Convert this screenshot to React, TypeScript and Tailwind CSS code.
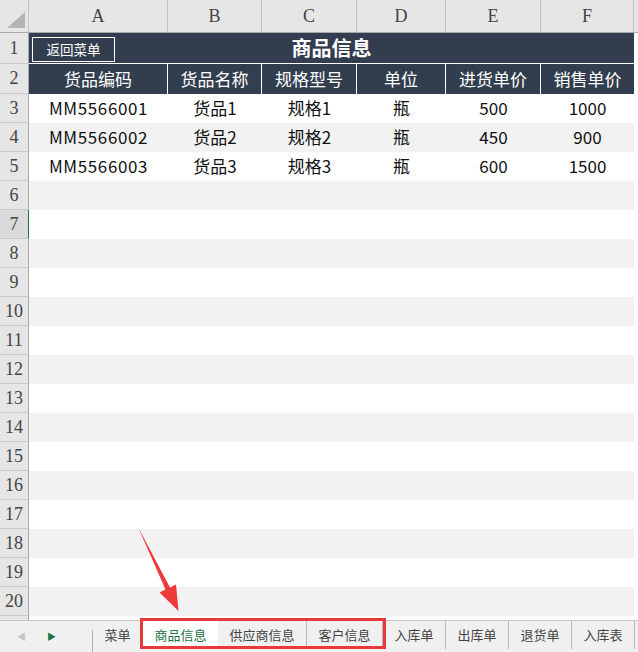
import React from "react"

const cols = [
  { key: "A", w: "w-[139px]" },
  { key: "B", w: "w-[94px]" },
  { key: "C", w: "w-[95px]" },
  { key: "D", w: "w-[89px]" },
  { key: "E", w: "w-[95px]" },
  { key: "F", w: "w-[93px]" },
]

const headers = ["货品编码", "货品名称", "规格型号", "单位", "进货单价", "销售单价"]

const data = [
  ["MM5566001", "货品1", "规格1", "瓶", "500", "1000"],
  ["MM5566002", "货品2", "规格2", "瓶", "450", "900"],
  ["MM5566003", "货品3", "规格3", "瓶", "600", "1500"],
]

const tabs = ["菜单", "商品信息", "供应商信息", "客户信息", "入库单", "出库单", "退货单", "入库表"]

const serif = "font-['Liberation_Serif','DejaVu_Serif',serif]"
const sans = "font-['Noto_Sans_CJK_SC','Noto_Sans',sans-serif]"

function RowHead({ n, active }: { n: number; active?: boolean }) {
  return (
    <div
      className={`flex w-[29px] shrink-0 items-center justify-center border-b border-r border-b-[#c9c9c9] text-[18px] text-[#444] ${serif} ${
        active ? "border-r-[#217346] bg-[#dadada]" : "border-r-[#a9a9a9] bg-[#e6e6e6]"
      }`}
    >
      {n}
    </div>
  )
}

export default function App() {
  const rows = Array.from({ length: 18 }, (_, i) => i + 3)

  return (
    <div className={`relative flex h-[652px] w-[638px] flex-col overflow-hidden bg-white ${sans}`}>
      {/* column letters */}
      <div className="flex h-[33px] shrink-0 border-b border-[#a9a9a9] bg-[#e6e6e6]">
        <div className="relative w-[29px] shrink-0 border-r border-[#c3c3c3]">
          <svg className="absolute left-[7px] top-[12px]" width="18" height="16" viewBox="0 0 18 16">
            <polygon points="0,16 18,16 18,0" fill="#b5b5b5" />
          </svg>
        </div>
        {cols.map((c) => (
          <div
            key={c.key}
            className={`${c.w} flex shrink-0 items-end justify-center border-r border-[#c3c3c3] pb-[2px] text-[18px] text-[#444] ${serif}`}
          >
            {c.key}
          </div>
        ))}
        <div className="flex-1" />
      </div>

      {/* row 1 title */}
      <div className="flex h-[31px] shrink-0">
        <RowHead n={1} />
        <div className="relative flex w-[605px] shrink-0 items-center justify-center border-b border-white bg-[#323e4f]">
          <span className="text-[20px] font-bold leading-none text-white">商品信息</span>
          <div className="absolute left-[3px] top-[4px] flex h-[25px] w-[83px] items-center justify-center border border-white text-[13.5px] text-white">
            返回菜单
          </div>
        </div>
      </div>

      {/* row 2 headers */}
      <div className="flex h-[30px] shrink-0">
        <RowHead n={2} />
        {headers.map((h, i) => (
          <div
            key={h}
            className={`${cols[i].w} flex shrink-0 items-center justify-center bg-[#323e4f] text-[17px] text-white ${
              i < 5 ? "border-r border-white" : ""
            }`}
          >
            {h}
          </div>
        ))}
      </div>

      {rows.map((n) => {
        const rec = data[n - 3]
        const band = n % 2 === 0 ? "bg-[#f2f2f2]" : "bg-white"
        return (
          <div key={n} className="flex h-[29px] shrink-0">
            <RowHead n={n} active={n === 7} />
            {cols.map((c, i) => (
              <div
                key={c.key}
                className={`${c.w} ${band} flex shrink-0 items-center justify-center pb-[1px] text-[17px] text-[#111] ${
                  i === 0 ? "tracking-[0.6px]" : ""
                }`}
              >
                {rec ? rec[i] : ""}
              </div>
            ))}
          </div>
        )
      })}

      <div className="flex flex-1">
        <div className="w-[29px] shrink-0 border-r border-[#a9a9a9] bg-[#e6e6e6]" />
      </div>

      {/* sheet tabs */}
      <div className="flex h-[32px] shrink-0 border-t border-[#c6c6c6] bg-[#f0f0f0] text-[13px] text-[#444]">
        <div className="flex w-[93px] shrink-0 items-center">
          <span className="ml-[17px] text-[9px] text-[#c4c4c4]">◀</span>
          <span className="ml-[21px] text-[9px] text-[#217346]">▶</span>
          <div className="ml-auto h-[22px] w-px self-end bg-[#b0b0b0]" />
        </div>
        {tabs.map((t, i) => (
          <div
            key={t}
            className={`flex h-[28px] shrink-0 items-center px-[11.5px] ${
              i === 1 ? "bg-white text-[#217346]" : "border-r border-[#b8b8b8]"
            }`}
          >
            {t}
          </div>
        ))}
      </div>

      {/* annotation */}
      <div className="absolute left-[140px] top-[618px] h-[31px] w-[246px] border-[3px] border-[#e8393a]" />
      <svg className="absolute left-0 top-0" width="638" height="652" viewBox="0 0 638 652">
        <polygon
          points="138,527 170,587.5 176,584.5 178.5,611 159.5,592.5 165.5,589.5"
          fill="#ee3a3a"
        />
      </svg>
    </div>
  )
}
